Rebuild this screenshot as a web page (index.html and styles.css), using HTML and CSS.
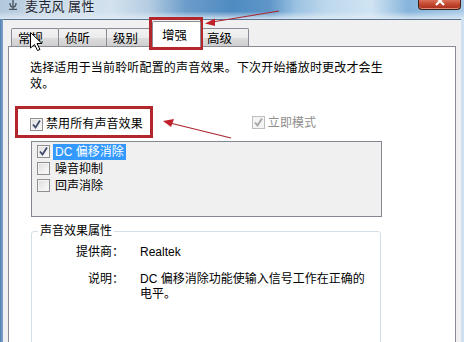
FILE: index.html
```html
<!DOCTYPE html>
<html lang="zh-CN">
<head>
<meta charset="utf-8">
<title>麦克风 属性</title>
<link rel="stylesheet" href="styles.css">
</head>
<body>
<div class="window">
  <div class="titlebar">
    <svg class="app-icon" width="12" height="10" viewBox="0 0 12 10">
      <path d="M6 0 V6 M3 3 Q3 7 6 7 Q9 7 9 3 M6 7 V9 M2 9.5 H10" stroke="#4b5560" stroke-width="1.4" fill="none"/>
    </svg>
    <span class="title">麦克风 属性</span>
    <span class="close">
      <svg width="16" height="8" viewBox="0 0 16 8"><path d="M4 -3 L12 5 M12 -3 L4 5" stroke="#fff" stroke-width="2.2"/></svg>
    </span>
  </div>
  <div class="frame">
    <div class="client">
      <div class="tabs">
        <div class="tab t1">常规</div>
        <div class="tab t2">侦听</div>
        <div class="tab t3">级别</div>
        <div class="tab active">增强</div>
        <div class="tab t5">高级</div>
      </div>
      <div class="panel">
        <p class="desc">选择适用于当前聆听配置的声音效果。下次开始播放时更改才会生效。</p>
        <div class="opts">
          <div class="chk">
            <span class="box"><svg width="11" height="11" viewBox="0 0 11 11"><path d="M2 5.5 L4.5 8.5 L9 1.5" stroke="#3d4a6b" stroke-width="1.8" fill="none"/></svg></span>
            <span>禁用所有声音效果</span>
          </div>
          <div class="chk disabled">
            <span class="box"><svg width="11" height="11" viewBox="0 0 11 11"><path d="M2 5.5 L4.5 8.5 L9 1.5" stroke="#a4a4a4" stroke-width="1.8" fill="none"/></svg></span>
            <span>立即模式</span>
          </div>
        </div>
        <div class="list">
          <div class="item">
            <span class="box"><svg width="11" height="11" viewBox="0 0 11 11"><path d="M2 5.5 L4.5 8.5 L9 1.5" stroke="#3d4a6b" stroke-width="1.8" fill="none"/></svg></span>
            <span class="txt sel">DC 偏移消除</span>
          </div>
          <div class="item">
            <span class="box"></span>
            <span class="txt">噪音抑制</span>
          </div>
          <div class="item">
            <span class="box"></span>
            <span class="txt">回声消除</span>
          </div>
        </div>
        <fieldset class="group">
          <legend>声音效果属性</legend>
          <div class="prop first">
            <div class="k">提供商：</div>
            <div class="v">Realtek</div>
          </div>
          <div class="prop second">
            <div class="k">说明：</div>
            <div class="v">DC 偏移消除功能使输入信号工作在正确的电平。</div>
          </div>
        </fieldset>
      </div>
    </div>
  </div>
  <svg class="annot" width="464" height="342" viewBox="0 0 464 342">
    <rect x="150.5" y="18.5" width="51" height="30" fill="none" stroke="#b3262c" stroke-width="3"/>
    <rect x="16.5" y="107.5" width="135" height="29" fill="none" stroke="#b3262c" stroke-width="3"/>
    <line x1="279" y1="11" x2="212" y2="22" stroke="#a8262e" stroke-width="1.2"/>
    <polygon points="205,23.5 215,18.5 215,26" fill="#c0202a"/>
    <line x1="231" y1="138" x2="170" y2="123" stroke="#a8262e" stroke-width="1.2"/>
    <polygon points="163,121 174,119 171,127" fill="#c0202a"/>
    <path d="M30.5 32.5 L30.5 48 L34.5 44.5 L37.5 50.5 L40 49.5 L37 43.5 L42 43.5 Z" fill="#fff" stroke="#000" stroke-width="1"/>
  </svg>
</div>
</body>
</html>
```

FILE: styles.css
```css
html, body {
  margin: 0;
  padding: 0;
}
body {
  width: 464px;
  height: 342px;
  overflow: hidden;
  font-family: "Liberation Sans", "Noto Sans CJK SC", sans-serif;
  font-size: 12px;
  color: #000;
}
.window {
  position: relative;
  width: 464px;
  height: 342px;
  overflow: hidden;
  display: flex;
  flex-direction: column;
  background: #9cc0e0;
}
.titlebar {
  height: 19px;
  flex: none;
  display: flex;
  align-items: flex-start;
  position: relative;
  background:
    linear-gradient(180deg, rgba(255,255,255,0) 0%, rgba(255,255,255,0) 60%, rgba(225,236,245,0.85) 100%),
    linear-gradient(90deg, #b2c8dc 0%, #c6d8e7 10%, #d3e2ee 24%, #b5cde2 32%, #6c9dca 40%, #4f8bc1 50%, #5e96c8 58%, #9cc3e3 64%, #bcd7ec 70%, #d0e4f3 80%, #86b4db 88%, #a9cbe7 100%);
}
.app-icon {
  margin: 0 0 0 7px;
}
.title {
  margin: -3px 0 0 6px;
  font-family: "Noto Sans CJK SC", sans-serif;
  font-size: 13px;
  line-height: 17px;
  color: #1c2430;
  text-shadow: 0 0 4px rgba(255,255,255,0.8);
  letter-spacing: 0.3px;
}
.close {
  position: absolute;
  left: 418px;
  top: 0;
  width: 43px;
  height: 10px;
  box-sizing: border-box;
  border: 1px solid #3c1f1a;
  border-top: none;
  border-radius: 0 0 4px 4px;
  background: linear-gradient(180deg, #d9705a 0%, #c2452e 50%, #a7301d 100%);
  box-shadow: inset 0 -1px 0 rgba(255,200,180,0.6);
  display: flex;
  justify-content: center;
}
.frame {
  flex: 1;
  display: flex;
  padding: 0 3px 0 3px;
  background: linear-gradient(90deg, #557fb0 0px, #7fa5cc 3px, #cfe1f1 3px);
  min-height: 0;
}
.client {
  flex: 1;
  display: flex;
  flex-direction: column;
  background: #f0f0f0;
  border-top: 1px solid #5b7290;
  padding: 1px 5px 0 5px;
  min-height: 0;
}
.tabs {
  display: flex;
  align-items: flex-end;
  padding-left: 3px;
  height: 25px;
  flex: none;
}
.tab {
  box-sizing: border-box;
  height: 18px;
  margin-left: -1px;
  border: 1px solid #898c95;
  border-bottom: none;
  border-radius: 2px 2px 0 0;
  background: linear-gradient(180deg, #f2f2f2 0%, #ebebeb 50%, #dddddd 51%, #cfcfcf 100%);
  font-family: "Noto Sans CJK SC", sans-serif;
  font-size: 12.5px;
  line-height: 18px;
  padding-left: 6px;
  text-align: left;
}
.t1 { width: 48px; margin-left: 0; }
.t2 { width: 49px; }
.t3 { width: 47px; }
.t5 { width: 49px; }
.active {
  width: 49px;
  height: 26px;
  margin-bottom: -1px;
  background: #fff;
  position: relative;
  z-index: 1;
  line-height: 26px;
  padding-left: 9px;
  padding-top: 0;
}
.panel {
  flex: 1;
  background: #fff;
  border: 1px solid #898c95;
  border-bottom: none;
  padding-left: 21px;
  min-height: 0;
  overflow: hidden;
}
.desc {
  margin: 12px 0 0 0;
  width: 362px;
  line-height: 16px;
  font-family: "Noto Sans CJK SC", sans-serif;
  letter-spacing: 0.17px;
}
.opts {
  display: flex;
  margin-top: 25px;
  height: 16px;
  align-items: center;
}
.chk {
  display: flex;
  align-items: center;
  line-height: 16px;
  letter-spacing: 0.1px;
}
.chk .box {
  margin-right: 3px;
}
.chk.disabled {
  margin-left: 109px;
  margin-top: -3px;
  color: #8e8e8e;
}
.chk.disabled .box {
  border-color: #bdbdbd;
  background: #f4f4f4;
}
.box {
  box-sizing: border-box;
  width: 13px;
  height: 13px;
  border: 1px solid #8e8f8f;
  background: linear-gradient(135deg, #dcdcdc 0%, #f0f0f0 60%, #fbfbfb 100%);
  box-shadow: inset 0 0 0 1px #f4f4f4;
  display: flex;
  align-items: center;
  justify-content: center;
  flex: none;
}
.list {
  margin: 9px 0 0 1px;
  width: 351px;
  height: 76px;
  box-sizing: border-box;
  border: 1px solid #828790;
  background: #f0f0f0;
  padding: 1px 0 0 5px;
}
.item {
  display: flex;
  align-items: center;
  height: 17px;
}
.item .txt {
  margin-left: 3px;
  padding: 0 2px;
  line-height: 16px;
}
.item .sel {
  background: #3399ff;
  color: #fff;
}
.group {
  margin: 6px 0 0 1px;
  width: 350px;
  box-sizing: border-box;
  height: 122px;
  padding: 0;
  border: 1px solid #d5dfe5;
  border-radius: 3px;
}
.group legend {
  margin-left: 6px;
  padding: 0 2px;
  line-height: 16px;
}
.prop {
  display: flex;
  align-items: flex-start;
}
.prop.first {
  margin-top: 5px;
  line-height: 16px;
}
.prop.second {
  margin-top: 12px;
  line-height: 15px;
}
.k {
  width: 92px;
  text-align: right;
  flex: none;
}
.v {
  margin-left: 16px;
  width: 232px;
}
.annot {
  position: absolute;
  left: 0;
  top: 0;
  pointer-events: none;
}
```
